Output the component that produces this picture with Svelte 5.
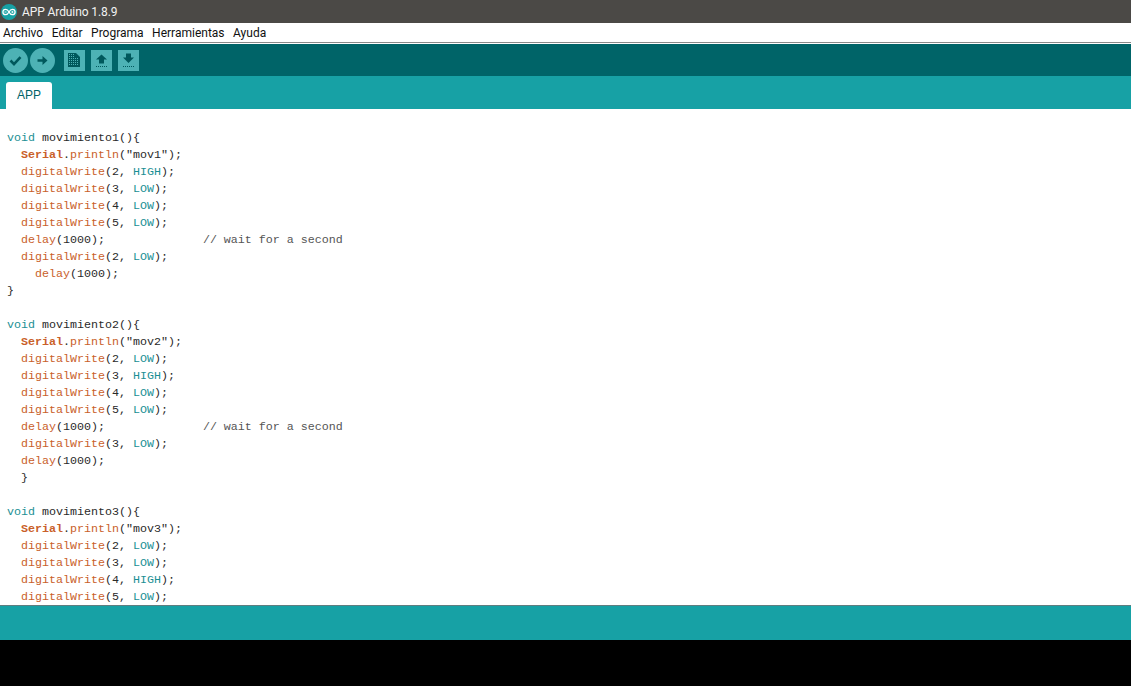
<script>
  const menus = ['Archivo', 'Editar', 'Programa', 'Herramientas', 'Ayuda'];

  // each token: [text, class]
  const k = (t) => [t, 'kw'];
  const f = (t) => [t, 'fn'];
  const c = (t) => [t, 'const'];
  const p = (t) => [t, ''];
  const write = (pin, level, indent = '  ') => [p(indent), f('digitalWrite'), p(`(${pin}, `), c(level), p(');')];
  const delay = (indent = '  ') => [p(indent), f('delay'), p('(1000);')];
  const wait = () => [...delay(), ['              // wait for a second', 'comment']];
  const serial = (n) => [p('  '), ['Serial', 'fn bold'], p('.'), f('println'), p(`("mov${n}");`)];
  const head = (n) => [k('void'), p(` movimiento${n}(){`)];

  const lines = [
    [p(' ')],
    head(1),
    serial(1),
    write(2, 'HIGH'),
    write(3, 'LOW'),
    write(4, 'LOW'),
    write(5, 'LOW'),
    wait(),
    write(2, 'LOW'),
    delay('    '),
    [p('}')],
    [p(' ')],
    head(2),
    serial(2),
    write(2, 'LOW'),
    write(3, 'HIGH'),
    write(4, 'LOW'),
    write(5, 'LOW'),
    wait(),
    write(3, 'LOW'),
    delay(),
    [p('  }')],
    [p(' ')],
    head(3),
    serial(3),
    write(2, 'LOW'),
    write(3, 'LOW'),
    write(4, 'HIGH'),
    write(5, 'LOW')
  ];
</script>

<div class="window">
  <div class="titlebar">
    <svg class="logo" width="16" height="16" viewBox="0 0 16 16">
      <circle cx="8" cy="8" r="8" fill="#17a1a5" />
      <path d="M8 8c-1-1.900-2-2.700-3.400-2.700a2.700 2.700 0 0 0 0 5.400C6 10.700 7 9.900 8 8c1-1.900 2-2.700 3.400-2.700a2.700 2.700 0 0 1 0 5.400C10 10.700 9 9.900 8 8z" fill="none" stroke="#fff" stroke-width="1.300" />
      <path d="M3.400 8h2.200M10.300 8h2.200M11.400 6.900v2.200" stroke="#fff" stroke-width=".8" />
    </svg>
    <span>APP Arduino 1.8.9</span>
  </div>

  <nav class="menubar">
    {#each menus as menu}
      <span>{menu}</span>
    {/each}
  </nav>

  <div class="toolbar">
    <div class="group round">
      <button class="round-btn" aria-label="Verificar">
        <svg width="25" height="25" viewBox="0 0 25 25"><path d="M7.500 12.500l3.500 3.700 6.500-7" fill="none" stroke="#00585c" stroke-width="2.600" /></svg>
      </button>
      <button class="round-btn" aria-label="Subir">
        <svg width="25" height="25" viewBox="0 0 25 25"><path d="M7.500 11.200h5V8l5 4.500-5 4.500v-3.200h-5z" fill="#00585c" /></svg>
      </button>
    </div>
    <div class="group">
      <button class="square-btn" aria-label="Nuevo">
        <svg width="21" height="21" viewBox="0 0 21 21">
          <path d="M4 3h8l4 4v10H4z" fill="#00585c" />
          <path d="M5 8.500h10M5 10.500h10M5 12.500h10M5 14.500h10M5 6.500h6M5 4.500h6" stroke="#4db2b5" stroke-width="1" stroke-dasharray="1 1" />
        </svg>
      </button>
      <button class="square-btn" aria-label="Abrir">
        <svg width="21" height="21" viewBox="0 0 21 21">
          <path d="M10.500 4.500l5.500 5h-3v4h-5v-4H5z" fill="#00585c" />
          <path d="M5 16.500h11" stroke="#00585c" stroke-width="1" stroke-dasharray="1 1" />
        </svg>
      </button>
      <button class="square-btn" aria-label="Salvar">
        <svg width="21" height="21" viewBox="0 0 21 21">
          <path d="M8 3.500h5v4h3l-5.500 5.500L5 7.500h3z" fill="#00585c" />
          <path d="M5 16.500h11" stroke="#00585c" stroke-width="1" stroke-dasharray="1 1" />
        </svg>
      </button>
    </div>
  </div>

  <div class="tabs">
    <div class="tab">APP</div>
  </div>

  <pre class="editor">{#each lines as line}<div class="line">{#each line as [text, cls]}<span class={cls}>{text}</span>{/each}</div>{/each}</pre>

  <div class="status"></div>
  <div class="console"></div>
</div>

<style>
  :global(body) {
    margin: 0;
    background: #000;
  }

  .window {
    display: flex;
    flex-direction: column;
    height: 686px;
    overflow: hidden;
    font-family: Roboto, "Noto Sans", sans-serif;
  }

  .titlebar {
    display: flex;
    align-items: center;
    gap: 5px;
    height: 23px;
    padding-left: 1px;
    background: #4b4946;
    color: #f2f2f2;
    font-size: 12px;
    letter-spacing: -0.1px;
  }

  .logo {
    flex: none;
  }

  .menubar {
    display: flex;
    align-items: center;
    gap: 8.500px;
    height: 19px;
    padding-left: 3px;
    background: #fff;
    border-bottom: 1px solid #8a8a8a;
    color: #111;
    font-size: 12px;
  }

  .toolbar {
    display: flex;
    align-items: center;
    gap: 9px;
    height: 32px;
    margin-top: 1px;
    padding: 0 0 0 3px;
    background: #006468;
    box-shadow: 0 -1px 0 #fff;
  }

  .group {
    display: flex;
    gap: 6px;
  }

  .group.round {
    gap: 2px;
  }

  button {
    display: flex;
    align-items: center;
    justify-content: center;
    padding: 0;
    border: 0;
    background: #4db2b5;
  }

  .round-btn {
    width: 25px;
    height: 25px;
    border-radius: 50%;
  }

  .square-btn {
    width: 21px;
    height: 21px;
  }

  .tabs {
    display: flex;
    align-items: flex-end;
    height: 33px;
    padding-left: 6px;
    background: #17a1a5;
  }

  .tab {
    display: flex;
    align-items: center;
    justify-content: center;
    width: 46px;
    height: 25px;
    padding-bottom: 2px;
    background: #fff;
    border-radius: 3px 3px 0 0;
    color: #006468;
    font-size: 12px;
    font-family: "Liberation Sans", sans-serif;
  }

  .editor {
    flex: none;
    height: 497px;
    margin: 0;
    padding: 4px 0 0 7px;
    box-sizing: border-box;
    overflow: hidden;
    background: #fff;
    border-bottom: 1px solid #5f7d80;
    color: #2a2a2a;
    font-family: "Liberation Mono", monospace;
    font-size: 11.670px;
    line-height: 17px;
  }

  .line {
    height: 17px;
  }

  .kw {
    color: #1a8f94;
  }

  .fn {
    color: #c9602a;
  }

  .bold {
    font-weight: bold;
  }

  .const {
    color: #1a8f94;
  }

  .comment {
    color: #555;
  }

  .status {
    flex: none;
    height: 34px;
    background: #17a1a5;
  }

  .console {
    flex: 1;
    background: #000;
  }
</style>
